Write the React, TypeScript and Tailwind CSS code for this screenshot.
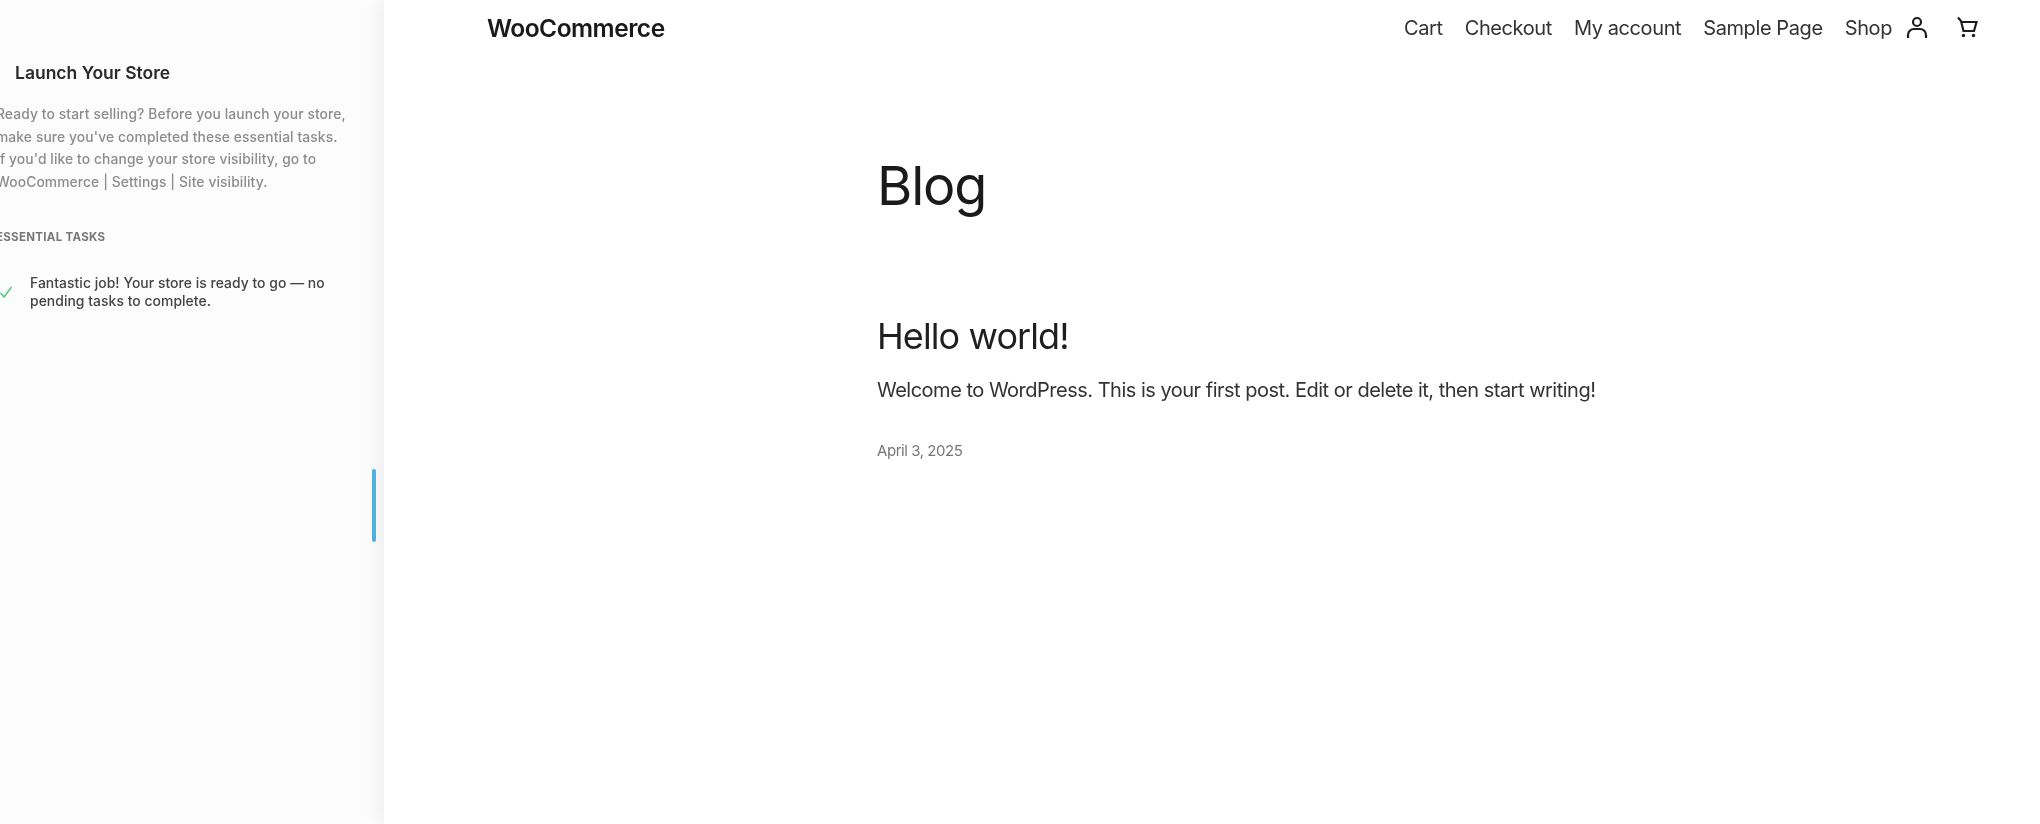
import React from 'react';

function AccountIcon() {
    return (
        <svg width="32" height="32" viewBox="0 0 32 32" fill="none" stroke="#1e1e1e" strokeWidth="2.2">
            <circle cx="16" cy="10" r="4" />
            <path d="M7 26v-3a6 6 0 0 1 6-6h6a6 6 0 0 1 6 6v3" />
        </svg>
    );
}

function CartIcon() {
    return (
        <svg width="32" height="32" viewBox="0 0 32 32" fill="none" stroke="#1e1e1e" strokeWidth="2.2">
            <path d="M6 5.500l3 3.500 2.500 10H22l2.500-9H9.500" />
            <circle cx="11.500" cy="23.500" r="1.700" fill="#1e1e1e" stroke="none" />
            <circle cx="21.500" cy="23.500" r="1.700" fill="#1e1e1e" stroke="none" />
        </svg>
    );
}

function Sidebar() {
    return (
        <aside className="w-[384px] shrink-0 overflow-hidden bg-[#fcfcfc] font-['Inter',sans-serif]">
            <div className="-ml-[4px] pt-[62px]">
                <h2 className="ml-[19px] text-[17.500px] leading-[22px] font-semibold text-[#2a2a2a]">Launch Your Store</h2>
                <p className="mt-[19px] w-[360px] text-[13.800px] leading-[22.500px] font-medium tracking-[0.12px] text-[#8c8c8c]">
                    Ready to start selling? Before you launch your store,
                    <br />
                    make sure you've completed these essential tasks.
                    <br />
                    If you'd like to change your store visibility, go to
                    <br />
                    WooCommerce | Settings | Site visibility.
                </p>
                <h3 className="mt-[36px] text-[11.500px] leading-[16px] font-bold tracking-[0.3px] text-[#777777] uppercase">
                    Essential tasks
                </h3>
                <div className="mt-[29px] flex items-center gap-[15px] pl-[3px]">
                    <svg width="16" height="16" viewBox="0 0 16 16" fill="none" stroke="#4ccb7a" strokeWidth="1.500" className="shrink-0">
                        <path d="M1.500 9l3.500 4 7.500-10" />
                    </svg>
                    <p className="text-[13.900px] leading-[18px] font-medium tracking-[0.05px] text-[#444444]">
                        Fantastic job! Your store is ready to go — no
                        <br />
                        pending tasks to complete.
                    </p>
                </div>
            </div>
        </aside>
    );
}

export default function App() {
    const links = ['Cart', 'Checkout', 'My account', 'Sample Page', 'Shop'];

    return (
        <div className="relative flex h-[824px] w-[2040px] overflow-hidden bg-white blur-[0.6px]">
            <Sidebar />
            <main className="relative flex-1 bg-white font-['Inter',sans-serif] shadow-[-6px_0_16px_rgba(0,0,0,0.05)]">
                <header className="flex h-[56px] items-center justify-between pr-[56px] pl-[103px]">
                    <span className="text-[24.500px] font-semibold tracking-[-0.5px] text-[#1a1a1a]">WooCommerce</span>
                    <nav className="flex items-center gap-[22px] text-[20px] tracking-[-0.4px] text-[#333333]">
                        {links.map((link) => (
                            <span key={link}>{link}</span>
                        ))}
                        <div className="-ml-[13px] flex items-center gap-[19px]">
                            <AccountIcon />
                            <CartIcon />
                        </div>
                    </nav>
                </header>
                <div className="mx-auto w-[670px] pt-[96px]">
                    <h1 className="text-[54px] leading-[68px] tracking-[-1.2px] text-[#1a1a1a]">Blog</h1>
                    <h2 className="mt-[94px] text-[36px] leading-[44px] tracking-[-0.9px] text-[#1f1f1f]">Hello world!</h2>
                    <p className="mt-[17px] text-[20px] leading-[30px] tracking-[-0.5px] whitespace-nowrap text-[#333333]">
                        Welcome to WordPress. This is your first post. Edit or delete it, then start writing!
                    </p>
                    <p className="mt-[34px] text-[15px] leading-[24px] tracking-[-0.45px] text-[#777777]">April 3, 2025</p>
                </div>
            </main>
            <div className="absolute top-[469px] left-[372px] h-[73px] w-[4px] rounded-full bg-[#4eb0de]" />
        </div>
    );
}
